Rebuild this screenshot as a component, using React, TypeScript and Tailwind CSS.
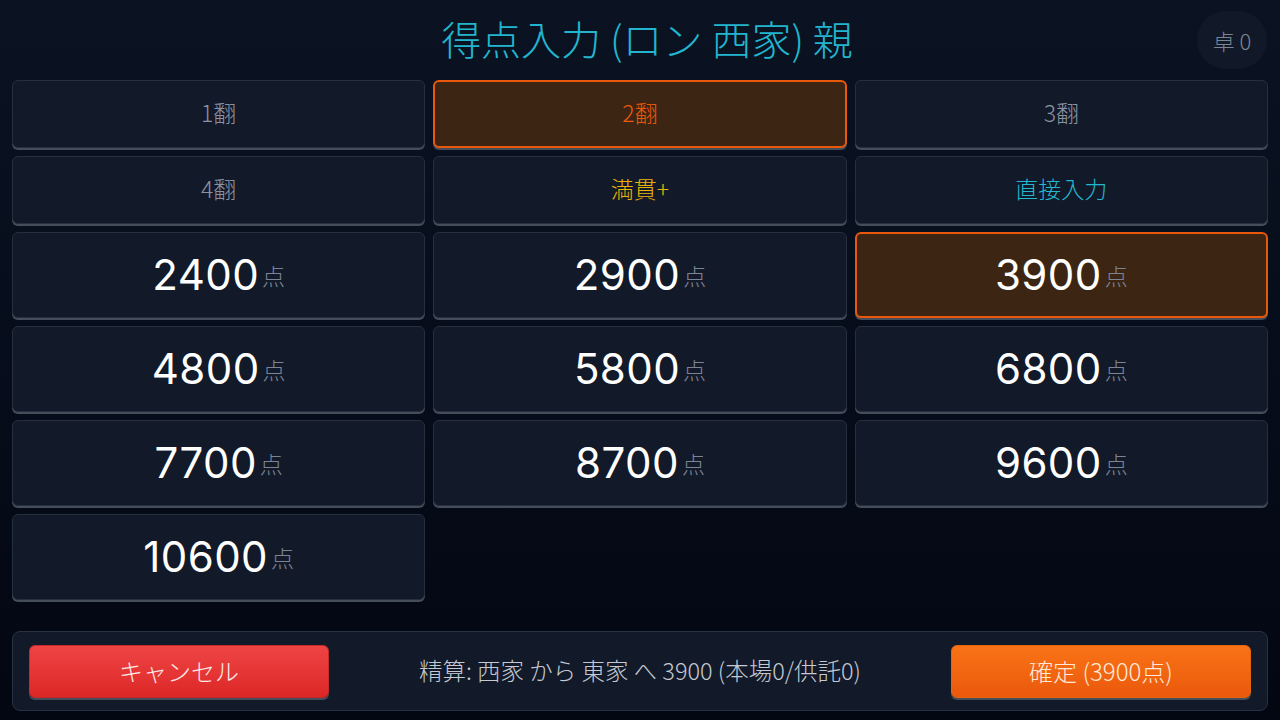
import { useState } from "react";

const JP = "font-['Noto_Sans_CJK_JP',sans-serif]";
const NUM = "font-['Inter','Noto_Sans_CJK_JP',sans-serif]";

type HanOption = { id: string; label: string; tone: string };

const HAN_OPTIONS: HanOption[] = [
  { id: "1", label: "1翻", tone: "text-[#8b93a3]" },
  { id: "2", label: "2翻", tone: "text-[#8b93a3]" },
  { id: "3", label: "3翻", tone: "text-[#8b93a3]" },
  { id: "4", label: "4翻", tone: "text-[#8b93a3]" },
  { id: "mangan", label: "満貫+", tone: "text-[#eab308]" },
  { id: "direct", label: "直接入力", tone: "text-[#22b8d0]" },
];

const SCORES = [2400, 2900, 3900, 4800, 5800, 6800, 7700, 8700, 9600, 10600];

const baseTile =
  "flex items-center justify-center rounded-md border shadow-[0_2px_0_#464d5a]";
const idleTile = "border-[#262f3f] bg-[#121929]";
const activeTile = "border-2 border-[#ea580c] bg-[#3d2513]";

export default function App() {
  const [han, setHan] = useState("2");
  const [score, setScore] = useState(3900);

  return (
    <div
      className={`flex h-[720px] w-full flex-col bg-gradient-to-b from-[#0b1322] to-[#030712] px-3 font-light ${JP}`}
    >
      <header className="grid h-20 grid-cols-[1fr_auto_1fr] items-center">
        <div />
        <h1 className="pb-1 pl-[14px] text-[40px] font-light leading-none text-[#22b5cf]">
          得点入力 (ロン 西家) 親
        </h1>
        <div className="flex justify-end pr-px">
          <div className="flex h-[58px] w-[70px] items-center justify-center rounded-full bg-[#111827] text-[22px] font-light leading-none text-[#7c8494]">
            卓 0
          </div>
        </div>
      </header>

      <div className="grid grid-cols-3 gap-x-2 gap-y-2">
        {HAN_OPTIONS.map((opt) => {
          const active = han === opt.id;
          return (
            <button
              key={opt.id}
              type="button"
              onClick={() => setHan(opt.id)}
              className={`${baseTile} h-[68px] pb-1 text-[23px] font-light leading-none ${
                active ? `${activeTile} text-[#ea580c]` : `${idleTile} ${opt.tone}`
              }`}
            >
              {opt.label}
            </button>
          );
        })}

        {SCORES.map((value) => {
          const active = score === value;
          return (
            <button
              key={value}
              type="button"
              onClick={() => setScore(value)}
              className={`${baseTile} h-[86px] gap-[3px] ${active ? activeTile : idleTile}`}
            >
              <span className={`${NUM} text-[42px] font-normal leading-none tracking-[0.01em] text-white`}>
                {value}
              </span>
              <span className="text-[23px] font-light leading-none text-[#7c8494]">点</span>
            </button>
          );
        })}
      </div>

      <footer className="mb-[9px] mt-auto flex h-[80px] items-center justify-between rounded-lg border border-[#283142] bg-[#121929] px-4">
        <button
          type="button"
          className="h-[53px] w-[300px] rounded-md border border-[#c42a2a] bg-gradient-to-b from-[#ef4444] to-[#dc2626] text-[24px] font-light text-[#fde8e8] shadow-[0_2px_0_#464d5a]"
        >
          キャンセル
        </button>
        <p className="text-[23.5px] font-light text-[#c4c9d2]">
          精算: 西家 から 東家 へ 3900 (本場0/供託0)
        </p>
        <button
          type="button"
          className="h-[53px] w-[300px] rounded-md border border-[#e3660f] bg-gradient-to-b from-[#f97316] to-[#ea580c] text-[24px] font-light text-[#ffe9d6] shadow-[0_2px_0_#464d5a]"
        >
          確定 ({score}点)
        </button>
      </footer>
    </div>
  );
}
